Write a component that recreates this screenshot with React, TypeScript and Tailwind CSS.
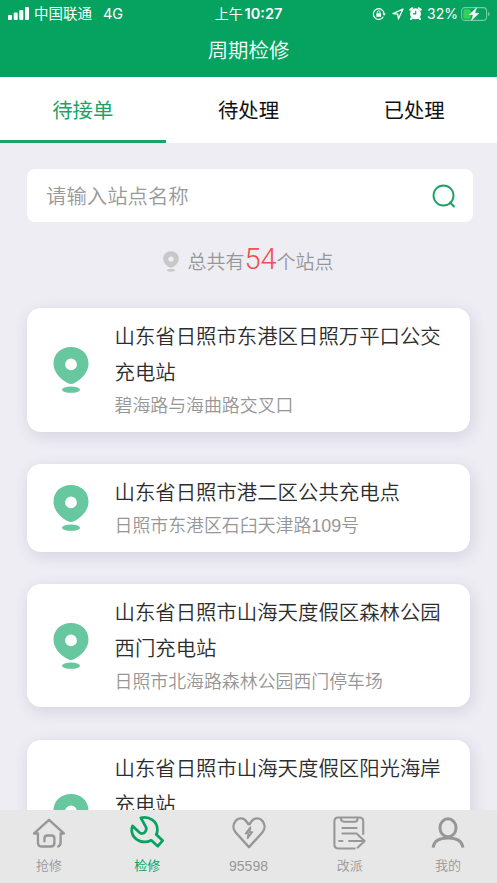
import React from "react";

const stations = [
  { lines: ["山东省日照市东港区日照万平口公交", "充电站"], address: "碧海路与海曲路交叉口", addressClass: "h-[30px]" },
  { lines: ["山东省日照市港二区公共充电点"], address: "日照市东港区石臼天津路109号", addressClass: "h-[30px]" },
  { lines: ["山东省日照市山海天度假区森林公园", "西门充电站"], address: "日照市北海路森林公园西门停车场", addressClass: "h-[30px]" },
  { lines: ["山东省日照市山海天度假区阳光海岸", "充电站"], address: "", addressClass: "h-[61px]" },
];

function Pin({ className }: { className: string }) {
  return (
    <svg viewBox="0 0 36 46" className={className} fill="currentColor">
      <path
        fillRule="evenodd"
        d="M18 0C28 0 35.500 6.800 35.500 16.600c0 8.600-6.500 15.400-14 19.500q-3.500 1.800-7 0C7 32 .5 25.200.5 16.600.5 6.800 8 0 18 0Zm0 11.500a5.900 5.900 0 1 0 0 11.800 5.900 5.900 0 0 0 0-11.800Z"
      />
      <ellipse cx="18" cy="42.700" rx="9" ry="3.100" />
    </svg>
  );
}

function StatusBar() {
  return (
    <div className="grid h-[27px] grid-cols-3 items-center font-[Inter,'Noto_Sans_CJK_SC',sans-serif] text-[14px]">
      <div className="flex items-center pl-2">
        <svg viewBox="0 0 21 13" className="h-[13px] w-[21px]" fill="currentColor">
          <rect x="0" y="8" width="4" height="5" rx="1" />
          <rect x="5.700" y="5.500" width="4" height="7.500" rx="1" />
          <rect x="11.300" y="3" width="4" height="10" rx="1" />
          <rect x="17" y="0" width="4" height="13" rx="1" />
        </svg>
        <span className="ml-[5px] text-[14.500px]">中国联通</span>
        <span className="ml-[11px] text-[14.500px]">4G</span>
      </div>
      <div className="text-center whitespace-nowrap">
        上午 <span className="-ml-0.5 text-[14.500px] font-semibold">10:27</span>
      </div>
      <div className="flex items-center justify-end pr-[6px]">
        <svg viewBox="0 0 14 14" className="h-[14px] w-[14px]" fill="none" stroke="currentColor" strokeWidth="1.200">
          <path d="M11.400 9.800a5.400 5.400 0 1 1 .7-3.300" />
          <path d="M10.400 6.500h3.400l-1.700 2.300Z" fill="currentColor" stroke="none" />
          <rect x="4.300" y="6.300" width="4.800" height="3.500" fill="currentColor" stroke="none" />
          <path d="M5.300 6.400V5.200a1.400 1.400 0 0 1 2.800 0v1.200" strokeWidth="1" />
        </svg>
        <svg viewBox="0 0 12 12" className="ml-[6px] h-[12px] w-[12px]" fill="none" stroke="currentColor" strokeWidth="1.300" strokeLinejoin="round">
          <path d="M11 1 1 5.600l4.800.6.600 4.800Z" />
        </svg>
        <svg viewBox="0 0 13 13" className="ml-[5px] h-[13px] w-[13px]">
          <circle cx="6.500" cy="6.800" r="5.500" fill="currentColor" />
          <path d="M1.300 2.800 3.200 1.200M11.700 2.800 9.800 1.200M2.900 11 2 12M10.100 11l.9 1" stroke="currentColor" strokeWidth="2" strokeLinecap="round" />
          <path d="M6.700 3.700v3.200H4" stroke="#05a35f" strokeWidth="1.100" fill="none" />
        </svg>
        <span className="ml-[5px] text-[14px]">32%</span>
        <svg viewBox="0 0 30 14" className="ml-[3px] h-[14px] w-[30px]">
          <rect x=".6" y=".6" width="25" height="12.800" rx="3.500" fill="none" stroke="#fff" strokeOpacity=".45" strokeWidth="1.100" />
          <path d="M27.200 4.800c1.900.8 1.900 3.600 0 4.400Z" fill="#fff" fillOpacity=".5" />
          <rect x="2.300" y="2.300" width="7.500" height="9.400" rx="1.500" fill="#32d158" />
          <path d="M15.600.8 8.300 7.700h4L10.500 13.300 18 6.300h-4.200Z" fill="#fff" stroke="#fff" strokeWidth=".5" />
        </svg>
      </div>
    </div>
  );
}

const iconClass = "h-[34px] w-[34px]";

const navItems = [
  {
    label: "抢修",
    itemClass: "font-[350] text-[#979797]",
    icon: (
      <svg viewBox="0 0 36 36" className={iconClass} fill="none" stroke="currentColor" strokeWidth="2.500" strokeLinecap="round" strokeLinejoin="round">
        <path d="M6.300 18.500H2.200L18 4l15.800 14.500h-3.500V28q0 3-2.600 4.300M6.300 18.500V28q0 4.300 4.200 4.300H20q3.700 0 3.700-3.700v-5q0-3-3-3h-4.500q-3 0-3 3v3.200" />
      </svg>
    ),
  },
  {
    label: "检修",
    itemClass: "-ml-[3px] text-[#05a35f]",
    icon: (
      <svg viewBox="0 0 36 36" className={iconClass} fill="none" stroke="currentColor" strokeWidth="2.900" strokeLinejoin="round">
        <path d="M11.500 2C20.500 0 29 5.500 29 14.500c0 2-.4 3.500-1.200 5l6.700 6.500-5 6-7-6.300C14.500 30 3.500 26 2 17c-.3-2.500 0-4.800.8-6.500l7.200 7c2 1.700 4.500 1.200 5.800-.5 1.700-2 2-4 .7-6Z" />
      </svg>
    ),
  },
  {
    label: "95598",
    itemClass: "font-[350] text-[#979797]",
    icon: (
      <svg viewBox="0 0 36 36" className={iconClass} fill="none" stroke="currentColor" strokeWidth="2.500" strokeLinejoin="round">
        <path d="m18 9.500-2.700-3.700C12.500 1.600 6.700 1.500 3.700 5.200.7 9 .9 14 3.900 17.500L18 33l14.100-15.500c3-3.500 3.200-8.500.2-12.300-3-3.700-8.800-3.600-11.800.6L18 9.500" />
        <path d="m19.500 12-5 6.500h3l-1 5 5-6.500h-3Z" strokeWidth="1.900" />
      </svg>
    ),
  },
  {
    label: "改派",
    itemClass: "-mr-[3px] font-[350] text-[#979797]",
    icon: (
      <svg viewBox="0 0 36 36" className={iconClass} fill="none" stroke="currentColor" strokeWidth="2.200" strokeLinecap="round" strokeLinejoin="round">
        <path d="M32 19V5.500q0-4-4-4H5.500q-4 0-4 4V30q0 4.500 4.500 4.500h17M8.500 1.800v1Q8.500 6 11.500 6h11.500q3 0 3-3.200v-1M10 12.700h15M10 18.500h15M6.500 26.500H10M17 26.500h16.500M26 19.500l7.500 7-7.500 7" />
      </svg>
    ),
  },
  {
    label: "我的",
    itemClass: "font-[350] text-[#979797]",
    icon: (
      <svg viewBox="0 0 36 36" className={iconClass} fill="none" stroke="currentColor" strokeWidth="3.200">
        <ellipse cx="18" cy="12.500" rx="8.500" ry="9.500" />
        <path d="M2.300 33.500C3 26.500 9 23.300 18 23.300S33 26.500 33.700 33.500" />
      </svg>
    ),
  },
];

export default function App() {
  return (
    <div className="flex h-[883px] w-[497px] flex-col overflow-hidden bg-[#eeedf4] font-['Liberation_Sans','Noto_Sans_CJK_SC',sans-serif]">
      <header className="h-[77px] shrink-0 bg-[#05a35f] text-white">
        <StatusBar />
        <h1 className="pt-[6px] text-center text-[20.400px] leading-[36px] font-[350]">周期检修</h1>
      </header>

      <nav className="grid h-[66px] shrink-0 grid-cols-3 bg-white text-center text-[20.400px] leading-[68px]">
        <div className="h-[66px] border-b-[3px] border-[#1ba366] text-[#1ba366]">待接单</div>
        <div className="text-[#111]">待处理</div>
        <div className="text-[#111]">已处理</div>
      </nav>

      <main className="min-h-0 flex-1 overflow-hidden px-[27px] pt-[26px]">
        <div className="-mr-[3px] flex h-[53px] items-center justify-between rounded-lg bg-white pr-[17px] pl-[19px]">
          <span className="pt-[3px] text-[20.400px] font-[350] text-[#999]">请输入站点名称</span>
          <svg viewBox="0 0 24 24" className="h-6 w-6" fill="none" stroke="#1ba366" strokeWidth="1.900" strokeLinecap="round">
            <circle cx="11.500" cy="11.500" r="10" />
            <path d="m18 18.500 4 4" />
          </svg>
        </div>

        <div className="flex h-[86.400px] items-center justify-center pb-[7px] font-[350] text-[#969696]">
          <Pin className="mr-[8px] h-[21px] w-4 text-[#c8c8c8]" />
          <div className="flex items-baseline text-[19px]">
            总共有<span className="font-[Roboto,sans-serif] text-[29px] leading-none font-light text-[#ee4f50]">54</span>个站点
          </div>
        </div>

        <div className="flex flex-col gap-[32.400px]">
          {stations.map((station) => (
            <article
              key={station.lines[0]}
              className="flex items-center rounded-[14px] bg-white pt-[11px] pb-[10.400px] pl-[25.500px] shadow-[2px_4px_16px_rgba(60,50,90,0.14)]"
            >
              <Pin className="h-[46px] w-[36px] text-[#67c79f]" />
              <div className="ml-[26px] whitespace-nowrap">
                <div className="text-[20.400px] leading-[36px] font-[350] text-[#2d2d2d]">
                  {station.lines.map((line) => (
                    <div key={line}>{line}</div>
                  ))}
                </div>
                <div className={`text-[17.900px] leading-[30px] font-[350] text-[#969696] ${station.addressClass}`}>{station.address}</div>
              </div>
            </article>
          ))}
        </div>
      </main>

      <footer className="flex h-[73px] shrink-0 justify-between bg-[#e7e7e7] px-[23px]">
        {navItems.map((item) => (
          <div key={item.label} className={`flex w-[52px] shrink-0 flex-col items-center pt-[6px] ${item.itemClass}`}>
            {item.icon}
            <span className={`mt-[6px] leading-5 ${item.label === "95598" ? "text-[14px]" : "text-[13px]"}`}>{item.label}</span>
          </div>
        ))}
      </footer>
    </div>
  );
}
